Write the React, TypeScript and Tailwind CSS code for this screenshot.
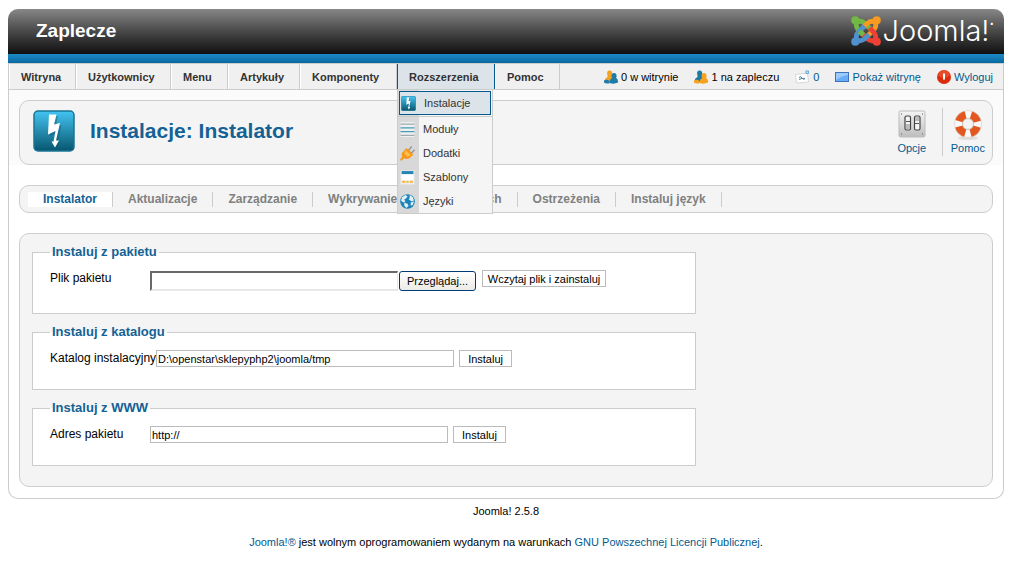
import type { ReactNode } from 'react'
import clsx from 'clsx'

const tabs = ['Instalator', 'Aktualizacje', 'Zarządzanie', 'Wykrywanie', 'Baza danych', 'Ostrzeżenia', 'Instaluj język']

export default function App() {
  return (
    <div className="pt-[9px] pr-[7px] pl-2 font-['Liberation_Sans',Arial,sans-serif] text-[11px] leading-4 text-black">
      <div className="rounded-[10px] border border-t-0 border-[#ccc] bg-white">
        <Header />
        <MenuBar />
        <main>
          <div className="bg-[#fbfbfb] px-[10px] pt-[10px]">
            <Toolbar />
          </div>
          <div className="px-[10px] pt-5 pb-[11px]">
            <SubMenu />
            <InstallForms />
          </div>
        </main>
      </div>
      <footer className="pt-1 text-center">
        <p>Joomla! 2.5.8</p>
        <p className="mt-[15px]">
          <a href="#joomla" className="text-[#025a8d]">Joomla!®</a> jest wolnym oprogramowaniem wydanym na warunkach{' '}
          <a href="#gnu" className="text-[#025a8d]">GNU Powszechnej Licencji Publicznej</a>.
        </p>
      </footer>
    </div>
  )
}

// ── Header ────────────────────────────────────────────────

function Header() {
  return (
    <header className="-mx-px overflow-hidden rounded-t-[10px]">
      <div className="flex h-[45px] items-center justify-between bg-linear-to-b from-[#888] to-[#111] pr-[10px] pb-[2px] pl-7 text-white">
        <h1 className="text-[19px] leading-6 font-bold">Zaplecze</h1>
        <div className="flex items-center gap-[2px]">
          <JoomlaMark />
          <span className="flex items-start font-[Inter,sans-serif] text-[29px] leading-8 font-light">
            Joomla!<span className="text-[8px] leading-4">•</span>
          </span>
        </div>
      </div>
      <div className="h-[9px] bg-linear-to-b from-[#1c8bc6] to-[#0868a0]" />
    </header>
  )
}

function JoomlaMark() {
  const pieces = [
    { color: '#72b844', angle: 0 },
    { color: '#f79a20', angle: 90 },
    { color: '#ee4035', angle: 180 },
    { color: '#5091cd', angle: 270 },
  ]
  return (
    <svg width="30" height="30" viewBox="0 0 30 30" fill="none" aria-hidden="true">
      {pieces.map((p) => (
        <g key={p.color} transform={`rotate(${p.angle} 15 15)`}>
          <path d="M11.500 18 7.500 14Q4 10 6 6 10.500 4 14 7.500L20 13.500" stroke={p.color} strokeWidth="4.800" />
          <circle cx="4.300" cy="4.300" r="4.100" fill={p.color} />
        </g>
      ))}
      <path d="m8.500 15 4 4" stroke="#72b844" strokeWidth="4.800" />
    </svg>
  )
}

// ── Menu bar ──────────────────────────────────────────────

function MenuItem({ label, className }: { label: string; className: string }) {
  return (
    <a href="#menu" className={clsx('flex items-center border-r border-l border-r-[#ccc] border-l-white pl-[11px]', className)}>
      {label}
    </a>
  )
}

function MenuBar() {
  return (
    <div className="flex h-[27px] items-stretch justify-between border-t border-b border-[#ccc] bg-[#f0f0f0]">
      <nav className="flex font-bold text-[#333]">
        <MenuItem label="Witryna" className="w-[67px]" />
        <MenuItem label="Użytkownicy" className="w-[95px]" />
        <MenuItem label="Menu" className="w-[57px]" />
        <MenuItem label="Artykuły" className="w-[72px]" />
        <MenuItem label="Komponenty" className="w-[97px]" />
        <div className="relative flex w-[98px]">
          <a href="#menu" className="flex flex-1 items-center border-r border-l border-[#025a8d] bg-[#dce4e9] pl-[11px]">
            Rozszerzenia
          </a>
          <DropDown />
        </div>
        <MenuItem label="Pomoc" className="w-[65px]" />
      </nav>
      <div className="flex items-center gap-4 pr-[10px]">
        <span className="flex items-center gap-[3px]">
          <UsersIcon front="#1d7ba6" back="#f5a21e" />
          0 w witrynie
        </span>
        <span className="flex items-center gap-[3px]">
          <UsersIcon front="#f5a21e" back="#1d7ba6" />
          1 na zapleczu
        </span>
        <a href="#messages" className="flex items-center gap-[3px] text-[#025a8d]">
          <MailIcon />0
        </a>
        <a href="#site" className="flex items-center gap-[3px] text-[#025a8d]">
          <ScreenIcon />
          Pokaż witrynę
        </a>
        <a href="#logout" className="flex items-center gap-[3px] text-[#025a8d]">
          <PowerIcon />
          Wyloguj
        </a>
      </div>
    </div>
  )
}

function DropDown() {
  return (
    <div className="absolute top-[26px] left-0 z-10 w-24 border-r border-b border-l border-[#ccc] bg-linear-to-r from-[#d8d8d8] from-[21px] to-[#f5f5f5] to-[21px] pt-px font-normal text-[#333]">
      <div className="border-b border-[#ccc] px-px pb-px">
        <a href="#install" className="flex h-6 items-center gap-2 border border-[#025a8d] bg-[#dce4e9] pl-px">
          <BoltIcon size={15} />
          Instalacje
        </a>
      </div>
      <DropItem icon={<ModulesIcon />} label="Moduły" />
      <DropItem icon={<PlugIcon />} label="Dodatki" />
      <DropItem icon={<TemplateIcon />} label="Szablony" />
      <DropItem icon={<GlobeIcon />} label="Języki" />
    </div>
  )
}

function DropItem({ icon, label }: { icon: ReactNode; label: string }) {
  return (
    <a href="#item" className="flex h-6 items-center gap-2 pl-[2px]">
      {icon}
      {label}
    </a>
  )
}

// ── Page title and toolbar ────────────────────────────────

function Toolbar() {
  return (
    <div className="flex h-[65px] items-center justify-between rounded-[10px] border border-[#ccc] bg-[#f4f4f4] pr-[7px] pb-[2px] pl-[13px]">
      <div className="flex items-center gap-[15px] pb-[2px]">
        <BoltIcon size={42} />
        <h2 className="text-[21px] leading-6 font-bold text-[#146295]">Instalacje: Instalator</h2>
      </div>
      <div className="flex text-center text-[#025a8d]">
        <a href="#options" className="flex flex-col items-center px-[14px]">
          <SwitchesIcon />
          Opcje
        </a>
        <a href="#help" className="flex flex-col items-center border-l border-[#ccc] pl-2">
          <LifebuoyIcon />
          Pomoc
        </a>
      </div>
    </div>
  )
}

function SubMenu() {
  return (
    <nav className="flex h-7 items-center rounded-[10px] border border-[#ccc] bg-[#f4f4f4] pl-2 text-[12px] font-bold text-[#808080]">
      {tabs.map((tab, i) => (
        <a
          key={tab}
          href="#tab"
          className={clsx('border-r border-[#ccc] px-[15px] leading-[15px] whitespace-nowrap', i === 0 && 'bg-white text-[#146295]')}
        >
          {tab}
        </a>
      ))}
    </nav>
  )
}

// ── Install forms ─────────────────────────────────────────

function InstallForms() {
  return (
    <form className="mt-5 flex flex-col gap-2 rounded-[10px] border border-[#ccc] bg-[#f4f4f4] px-3 pt-2 pb-5">
      <Section title="Instaluj z pakietu">
        <FieldLabel id="package">Plik pakietu</FieldLabel>
        <input
          id="package"
          type="text"
          readOnly
          className="mt-px h-5 w-[248px] border-t-2 border-r border-b-2 border-l-2 border-t-[#696969] border-r-[#e8e8e8] border-b-[#e8e8e8] border-l-[#696969] bg-white px-px outline-none"
        />
        <button
          type="button"
          className="mt-px mr-[6px] ml-px h-5 w-[77px] rounded-[3px] border border-[#003c74] bg-linear-to-b from-white to-[#ecebe5]"
        >
          Przeglądaj...
        </button>
        <PlainButton className="w-[124px]">Wczytaj plik i zainstaluj</PlainButton>
      </Section>
      <Section title="Instaluj z katalogu">
        <FieldLabel id="directory">Katalog instalacyjny</FieldLabel>
        <TextField id="directory" value="D:\openstar\sklepyphp2\joomla/tmp" />
        <PlainButton className="w-[53px]">Instaluj</PlainButton>
      </Section>
      <Section title="Instaluj z WWW">
        <FieldLabel id="url">Adres pakietu</FieldLabel>
        <TextField id="url" value="http://" />
        <PlainButton className="w-[53px]">Instaluj</PlainButton>
      </Section>
    </form>
  )
}

function Section({ title, children }: { title: string; children: ReactNode }) {
  return (
    <fieldset className="w-[70%] border border-[#ccc] bg-white px-[17px] pb-[22px]">
      <legend className="px-[2px] text-[13px] leading-5 font-bold text-[#146295]">{title}</legend>
      <div className="flex items-start pt-2">{children}</div>
    </fieldset>
  )
}

function FieldLabel({ id, children }: { id: string; children: ReactNode }) {
  return (
    <label htmlFor={id} className="min-w-[100px] text-[12px] leading-4 whitespace-nowrap">
      {children}
    </label>
  )
}

function TextField({ id, value }: { id: string; value: string }) {
  return (
    <input
      id={id}
      type="text"
      defaultValue={value}
      className="mr-[5px] h-[17px] w-[298px] border border-[#bbb] bg-white px-px outline-none"
    />
  )
}

function PlainButton({ className, children }: { className: string; children: ReactNode }) {
  return (
    <button type="button" className={clsx('h-[17px] border border-[#bbb] bg-white pt-px leading-[15px] whitespace-nowrap', className)}>
      {children}
    </button>
  )
}

// ── Icons ─────────────────────────────────────────────────

function BoltIcon({ size }: { size: number }) {
  return (
    <svg width={size} height={size} viewBox="0 0 42 42" aria-hidden="true">
      <defs>
        <linearGradient id="bolt" x1="0" y1="0" x2="0" y2="1">
          <stop offset="0" stopColor="#44c4f2" />
          <stop offset="1" stopColor="#07566f" />
        </linearGradient>
      </defs>
      <rect x="1" y="1" width="40" height="40" rx="4" fill="url(#bolt)" stroke="#187593" strokeWidth="1.500" />
      <path d="M17 6h8l-2 10 5.500-1-3.500 17h3l-5 6-3.500-6h3l1.500-9-7 3z" fill="#0b556d" opacity=".4" />
      <path d="M16 4.500h7.500l-2.500 10 6-1.500-4 17.500h3l-4 7-3.500-6h2l2-10.500-7.500 3.500z" fill="#fff" />
    </svg>
  )
}

function UsersIcon({ front, back }: { front: string; back: string }) {
  return (
    <svg width="14" height="14" viewBox="0 0 14 14" aria-hidden="true">
      <path d="M3.500 6Q2 .5 5.500.5T8 5q0 2 1 3v4H1Q0 8.500 3.500 7z" fill={back} />
      <path d="M8 8q-1.500-5 2-5t2.200 5q2 1 1.800 4.500-4 2-8.500.5Q5 9.500 8 8" fill={front} />
      <path d="M0 10.500q3-1.500 5.500.5v2.200Q2 14 0 12.500z" fill={front} />
    </svg>
  )
}

function MailIcon() {
  return (
    <svg width="15" height="14" viewBox="0 0 15 14" fill="none" aria-hidden="true">
      <path d="m.5 4.500 12-1.500 1 9-12 1z" fill="#fff" stroke="#d5d9dc" />
      <path d="M4 7.500q2-2 3 .5t3 0M4 9.500q3-2 6-.5" stroke="#4b7f9f" />
      <rect x="11" y="1" width="2.500" height="2.500" fill="#cfe8f8" stroke="#4e9acb" strokeWidth=".8" />
    </svg>
  )
}

function ScreenIcon() {
  return (
    <svg width="14" height="14" viewBox="0 0 14 14" aria-hidden="true">
      <rect x=".5" y="2.500" width="13" height="9" fill="#67aef6" stroke="#3f72bd" />
      <path d="M1 3h12v2Q6 6 1 10z" fill="#9bcbfb" />
    </svg>
  )
}

function PowerIcon() {
  return (
    <svg width="14" height="14" viewBox="0 0 14 14" aria-hidden="true">
      <circle cx="7" cy="7" r="7" fill="#da2b0b" />
      <path d="M1 6a6 6 0 0 1 12 0Q7 9 1 6" fill="#f2603d" opacity=".6" />
      <path d="M7 3.500v6" stroke="#fff" strokeWidth="2" />
    </svg>
  )
}

function ModulesIcon() {
  return (
    <svg width="15" height="15" viewBox="0 0 14 14" aria-hidden="true">
      <path d="M.5 0h13v14H.5z" fill="#edf0f1" />
      <path d="M.5 2h13M.5 12.500h13" stroke="#a3abb0" />
      <path d="M.5 5.500h13M.5 9h13" stroke="#4b9ab3" strokeWidth="1.200" />
    </svg>
  )
}

function PlugIcon() {
  return (
    <svg width="15" height="15" viewBox="0 0 14 14" fill="none" aria-hidden="true">
      <path d="m8 4 3-3.500M10.500 7l3-3.500" stroke="#939393" strokeWidth="1.200" />
      <path d="M5.500 2Q9 3 12.500 8.500q-2 .5-3 2.500Q6 13 4 11.500L1 14l-1-1.500L2 10Q.5 6.500 3.500 5z" fill="#f7981d" />
      <path d="M5.500 4 10 8.500 7 10 4 7z" fill="#ffc04e" />
    </svg>
  )
}

function TemplateIcon() {
  return (
    <svg width="15" height="15" viewBox="0 0 14 14" aria-hidden="true">
      <path d="M.5.5h13v13H.5z" fill="#eee" />
      <path d="M1.500 1h11v3h-11z" fill="#2584b5" />
      <path d="M1.500 4h11v6h-11z" fill="#fff" />
      <path d="M2 10h3v2H2zm4 0h2v2H6zm3 0h3v2H9z" fill="#f4b33d" />
    </svg>
  )
}

function GlobeIcon() {
  return (
    <svg width="15" height="15" viewBox="0 0 14 14" aria-hidden="true">
      <circle cx="7" cy="7" r="6.800" fill="#1c82b8" />
      <path d="m2 3 3-2 2 1-1 2-2 1 1 2-2 1-2-2zM9 1l3 2 1 3-2 1-3-2 1-1zM4 8l3 1 1 2-2 2-2-2zM10 8l3-1-1 3-2 1z" fill="#dff1fa" />
    </svg>
  )
}

function SwitchesIcon() {
  return (
    <svg width="32" height="32" viewBox="0 -1 32 32" fill="none" aria-hidden="true">
      <defs>
        <linearGradient id="plate" x1="0" y1="0" x2="0" y2="1">
          <stop offset="0" stopColor="#f5f5f5" />
          <stop offset="1" stopColor="#bdbdbd" />
        </linearGradient>
      </defs>
      <rect x="3" y="2" width="26" height="26" rx="1.500" fill="url(#plate)" stroke="#bcbcbc" />
      <rect x="9" y="7" width="5.500" height="14" rx="1.500" fill="#f5f5f5" stroke="#444" strokeWidth="1.200" />
      <rect x="18.500" y="7" width="5.500" height="14" rx="1.500" fill="#f5f5f5" stroke="#444" strokeWidth="1.200" />
      <path d="M10 15h4v5h-4zM19 8h4v4h-4z" fill="#bbb" />
      <path d="M10 12.500h4M19 14.500h4" stroke="#555" />
      <path d="M5 5h1M26 5h1M5 25h1M26 25h1" stroke="#888" strokeWidth="1.500" />
    </svg>
  )
}

// four orange bands centred on the diagonals
function LifebuoyIcon() {
  return (
    <svg width="32" height="32" viewBox="0 -1 32 32" fill="none" aria-hidden="true">
      <ellipse cx="16" cy="29" rx="10" ry="2" fill="#dedede" />
      <circle cx="16" cy="15" r="9.500" stroke="#f9f9f9" strokeWidth="8" />
      <circle cx="16" cy="15" r="9.500" stroke="#e2571f" strokeWidth="8" strokeDasharray="9.500 5.423" strokeDashoffset="-2.711" />
      <circle cx="16" cy="15" r="5.500" stroke="#c9c3bd" />
      <circle cx="16" cy="15" r="13.500" stroke="#d9c6bb" strokeWidth=".6" />
    </svg>
  )
}
